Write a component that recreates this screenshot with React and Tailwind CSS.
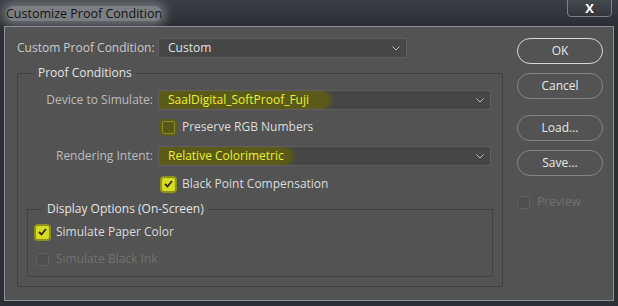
import React from 'react';

const font = { fontFamily: '"Open Sans", "Noto Sans", sans-serif' };

function Chevron() {
  return (
    <svg width="8" height="5" viewBox="0 0 8 5" className="shrink-0">
      <polyline points="0.5,0.5 4,4 7.5,0.5" fill="none" stroke="#bdbdbd" strokeWidth="1" />
    </svg>
  );
}

function Check() {
  return (
    <svg width="9" height="8" viewBox="0 0 9 8">
      <polyline points="1,4 3.5,6.5 8,1" fill="none" stroke="#2c2c12" strokeWidth="1.8" />
    </svg>
  );
}

function Box({ checked, mark, disabled }) {
  if (checked) {
    return (
      <span className="w-[13px] h-[13px] rounded-[2px] bg-[#d7db26] shadow-[0_0_0_2px_#8e901c] flex items-center justify-center shrink-0">
        <Check />
      </span>
    );
  }
  if (mark) {
    return (
      <span className="w-[13px] h-[13px] rounded-[2px] border border-[#8a8a2a] bg-[#57571a] shadow-[0_0_0_2px_#5d5d17] shrink-0" />
    );
  }
  return (
    <span
      className={
        'w-[13px] h-[13px] rounded-[2px] border shrink-0 ' +
        (disabled ? 'border-[#606060] bg-[#505050]' : 'border-[#7a7a7a] bg-[#4a4a4a]')
      }
    />
  );
}

function Select({ width, value, marked, markWidth }) {
  return (
    <div
      className="h-[20px] border border-[#5f5f5f] bg-[#464646] flex items-center justify-between pr-[6px] overflow-hidden"
      style={{ width }}
    >
      {marked ? (
        <span
          className="h-full flex items-center pl-[9px] bg-[#5b5b19] text-[#eef032] rounded-r-[9px] shadow-[3px_0_5px_#5b5b19]"
          style={{ width: markWidth }}
        >
          {value}
        </span>
      ) : (
        <span className="pl-[9px] text-[#e2e2e2]">{value}</span>
      )}
      <Chevron />
    </div>
  );
}

function Btn({ children, primary }) {
  return (
    <div
      className={
        'w-[86px] h-[26px] rounded-full border flex items-center justify-center text-[#e8e8e8] ' +
        (primary ? 'border-[#d9d9d9]' : 'border-[#858585]')
      }
    >
      {children}
    </div>
  );
}

export default function App() {
  return (
    <div className="w-[618px] h-[306px] bg-[#2c3035] flex flex-col text-[12px] leading-[16px]" style={font}>
      <div className="h-[26px] flex justify-between shrink-0 bg-gradient-to-b from-[#3b3f45] to-[#2b2f34]">
        <div className="pl-[6px] pt-[6px]">
          <span className="inline-block bg-[#7b7e82] shadow-[0_0_10px_4px_#6f7276] rounded-[8px] text-[#141414] text-[12.5px] leading-[15px]">
            Customize Proof Condition
          </span>
        </div>
        <div className="mr-[6px] w-[45px] h-[18px] -mt-[1px] rounded-b-[4px] border border-[#7d8085] bg-gradient-to-b from-[#454950] to-[#33373c] flex items-center justify-center text-white font-bold text-[13px]">
          X
        </div>
      </div>

      <div className="mx-[4px] h-[275px] border border-[#8d9094] bg-[#535353] flex pl-[12px] pt-[11px]">
        <div className="w-[486px] flex flex-col">
          <div className="flex items-center h-[20px]">
            <span className="w-[136px] text-right text-[#cbcbcb] whitespace-nowrap">Custom Proof Condition:</span>
            <div className="ml-[5px]">
              <Select width={249} value="Custom" />
            </div>
          </div>

          <fieldset className="mt-[7px] border border-[#414141] pb-[9px]">
            <legend className="ml-[16px] px-[4px] text-[#e4e4e4]">Proof Conditions</legend>
            <div className="flex items-center h-[20px] mt-[9px]">
              <span className="w-[135px] text-right text-[#bcbcbc] whitespace-nowrap">Device to Simulate:</span>
              <div className="ml-[5px]">
                <Select width={333} value="SaalDigital_SoftProof_Fuji" marked markWidth={170} />
              </div>
            </div>
            <div className="flex items-center h-[20px] mt-[7px] pl-[144px] gap-[7px]">
              <Box mark />
              <span className="text-[#dcdcdc]">Preserve RGB Numbers</span>
            </div>
            <div className="flex items-center h-[20px] mt-[9px]">
              <span className="w-[135px] text-right text-[#bcbcbc] whitespace-nowrap">Rendering Intent:</span>
              <div className="ml-[5px]">
                <Select width={333} value="Relative Colorimetric" marked markWidth={132} />
              </div>
            </div>
            <div className="flex items-center h-[20px] mt-[8px] pl-[144px] gap-[7px]">
              <Box checked />
              <span className="text-[#dcdcdc]">Black Point Compensation</span>
            </div>

            <fieldset className="mt-[7px] ml-[9px] w-[466px] border border-[#414141] pb-[7px]">
              <legend className="ml-[15px] px-[4px] text-[#e4e4e4]">Display Options (On-Screen)</legend>
              <div className="flex items-center h-[20px] mt-[5px] pl-[8px] gap-[7px]">
                <Box checked />
                <span className="text-[#dcdcdc]">Simulate Paper Color</span>
              </div>
              <div className="flex items-center h-[20px] mt-[7px] pl-[8px] gap-[7px]">
                <Box disabled />
                <span className="text-[#727272]">Simulate Black Ink</span>
              </div>
            </fieldset>
          </fieldset>
        </div>

        <div className="ml-[14px] flex flex-col">
          <Btn primary>OK</Btn>
          <div className="mt-[9px]">
            <Btn>Cancel</Btn>
          </div>
          <div className="mt-[16px]">
            <Btn>Load...</Btn>
          </div>
          <div className="mt-[9px]">
            <Btn>Save...</Btn>
          </div>
          <div className="mt-[16px] flex items-center gap-[7px] h-[20px]">
            <Box disabled />
            <span className="text-[#727272]">Preview</span>
          </div>
        </div>
      </div>
    </div>
  );
}
